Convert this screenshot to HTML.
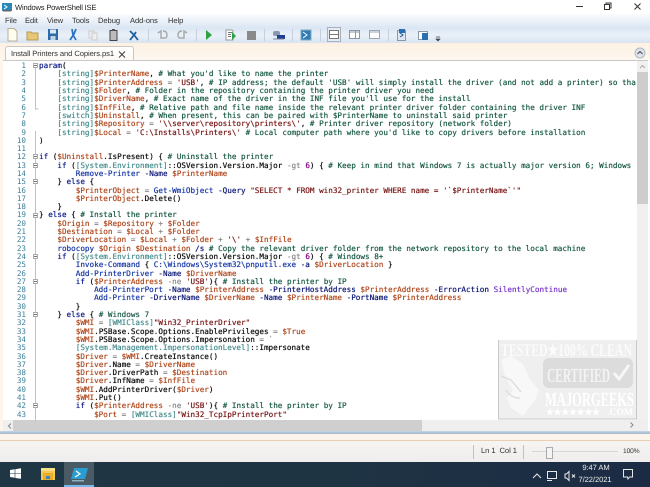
<!DOCTYPE html>
<html><head><meta charset="utf-8"><title>Windows PowerShell ISE</title>
<style>
html,body{margin:0;padding:0;background:#fff}
#r{position:relative;width:650px;height:487px;overflow:hidden;font-family:"Liberation Sans",sans-serif;color:#222;text-rendering:geometricPrecision}
.a{position:absolute}
.ui{position:absolute;white-space:nowrap;font-size:7.6px;letter-spacing:-.08px;line-height:10px;color:#333}
pre{margin:0;font-family:"DejaVu Sans Mono","Liberation Mono",monospace;font-size:7.64px;line-height:8.3px;text-rendering:geometricPrecision;color:#111}
#code{position:absolute;left:39px;top:62.15px;filter:blur(.25px);text-shadow:0 0 .5px currentColor}
#nums{position:absolute;left:5px;width:21px;top:62.15px;text-align:right;color:#3a7f98;filter:blur(.25px)}
#code span{text-shadow:0 0 .5px currentColor}
.s{color:#7a1a1a}.v{color:#b04a20}.c{color:#1c5c48}.t{color:#4a8f90}.m{color:#1a3aa8}.p{color:#101a78}.k{color:#10208a}.o{color:#8a8a8a}.g{color:#7a3ac8}.n{color:#800080}
</style></head><body><div id="r">
<!-- chrome backgrounds -->
<div class="a" style="left:0;top:0;width:650px;height:14px;background:#fff"></div>
<div class="a" style="left:0;top:14px;width:650px;height:14px;background:linear-gradient(#fafcfe,#dbe6f3)"></div>
<div class="a" style="left:0;top:28px;width:650px;height:15px;background:linear-gradient(#dbe6f3,#eaf0f8 50%,#d8e4f2)"></div>
<div class="a" style="left:0;top:43px;width:650px;height:17px;background:linear-gradient(#fdf1e2,#fdf7f0)"></div>
<!-- title -->
<svg class="a" style="left:2px;top:2px" width="10" height="10"><rect x="0" y="1" width="10" height="8" fill="#2a88b8"/><path d="M2 3l3 2-3 2" stroke="#fff" fill="none"/><rect x="1" y="8" width="8" height="1.5" fill="#666"/></svg>
<div class="ui" style="left:15px;top:3px;letter-spacing:-.2px;color:#222">Windows PowerShell ISE</div>
<!-- window controls -->
<svg class="a" style="left:570px;top:0" width="80" height="14" fill="none" stroke="#333"><path d="M6 6.500h7"/><rect x="34.500" y="4.500" width="5" height="5"/><path d="M36 4.500v-1.500h5v5h-1.500"/><path d="M64.500 3.500l6 6m0-6l-6 6"/></svg>
<!-- menu -->
<div class="ui" style="left:5px;top:16px">File</div>
<div class="ui" style="left:25px;top:16px">Edit</div>
<div class="ui" style="left:47px;top:16px">View</div>
<div class="ui" style="left:72px;top:16px">Tools</div>
<div class="ui" style="left:98px;top:16px">Debug</div>
<div class="ui" style="left:130px;top:16px">Add-ons</div>
<div class="ui" style="left:168px;top:16px">Help</div>
<!-- toolbar -->
<svg class="a" style="left:0;top:27px;filter:blur(.3px)" width="450" height="16">
<path d="M8 1.500h6l3 3v9.500h-9z" fill="#fffdf0" stroke="#b8b096"/>
<path d="M27 5h4l1 1h6v7h-11z" fill="#e8c678" stroke="#b99a50"/>
<rect x="48" y="2" width="10" height="11" fill="#2d6aa8"/><rect x="50" y="2.500" width="6" height="4" fill="#dce8f4"/><rect x="50.500" y="9" width="5" height="4" fill="#c4d2e0"/>
<path d="M70 13l4-6 2-5M76 13l-3-5-1-6" stroke="#2a70c0" stroke-width="1.700" fill="none"/>
<rect x="89" y="4" width="5" height="7" fill="#eee" stroke="#ccc"/><rect x="92" y="6" width="5" height="7" fill="#eee" stroke="#ccc"/>
<rect x="110" y="3.500" width="7" height="10" fill="#bbb" stroke="#444"/><rect x="112" y="2" width="3" height="2" fill="#555"/>
<path d="M130 4l4 4 4 5M130 13l4-5 2-3" stroke="#1f5f9f" stroke-width="1.800" fill="none"/>
<path d="M148.500 2v12M196.500 2v12M264.500 2v12M292.500 2v12M320.500 2v12M388.500 2v12" stroke="#c6d0dc"/>
<path d="M158 6l3-2v7h4c1 0 2-1 2-3s-1-4-4-4" stroke="#aaa" stroke-width="1.500" fill="none"/>
<path d="M187 6l-3-2v7h-4c-1 0-2-1-2-3s1-4 4-4" stroke="#aaa" stroke-width="1.500" fill="none"/>
<path d="M206 3l6 5-6 5z" fill="#2fa044"/>
<path d="M226 3h6l1 1v9h-7z" fill="#fff" stroke="#999"/><path d="M228 5.500h4M228 7.500h3M228 9.500h3" stroke="#777"/><path d="M232 5l4 4-4 4z" fill="#2fa044"/>
<rect x="247" y="4" width="9" height="9" fill="#8a8a8a"/>
<rect x="273" y="4" width="7" height="5" rx="2" fill="#889ab0"/><rect x="277" y="8" width="8" height="4" fill="#1f3f90"/><path d="M273 12h11" stroke="#789"/>
<rect x="301" y="3" width="10" height="10" fill="#2f7db8" stroke="#8ab"/><path d="M303 5l4 3-4 3" stroke="#fff" fill="none"/>
<rect x="327.500" y=".5" width="13" height="14" fill="#e4ecf5" stroke="#a8b0bc"/><rect x="329.500" y="3.500" width="9" height="8" fill="#fff" stroke="#777"/><path d="M330 7.500h8" stroke="#777"/>
<rect x="349.500" y="3.500" width="10" height="8" fill="#fff" stroke="#8a97a8"/><path d="M355.500 4v7M350 5h9" stroke="#8a97a8"/>
<rect x="369.500" y="3.500" width="10" height="8" fill="#fff" stroke="#9aa6b6"/><path d="M370 5h9" stroke="#9aa6b6"/>
<rect x="397.500" y="3.500" width="8" height="10" fill="#dfe8f2" stroke="#8a97a8"/><rect x="399" y="2" width="6" height="4" fill="#2a70b0"/><path d="M400 6l3 2-3 2" stroke="#1d5a94" fill="none"/>
<rect x="418.500" y="4.500" width="9" height="8" fill="#fff" stroke="#8a97a8"/><rect x="422" y="6" width="6" height="7" fill="#2a70b0"/>
<path d="M436 10h4M436 12l2 2 2-2z" fill="#444" stroke="#444" stroke-width=".7"/>
</svg>
<!-- tab -->
<div class="a" style="left:5px;top:46px;width:127px;height:15px;background:linear-gradient(#fff,#fdf9f3);border:1px solid #c8c6c0;border-bottom:0;border-radius:3px 3px 0 0"></div>
<div class="ui" style="left:11px;top:49px">Install Printers and Copiers.ps1</div>
<svg class="a" style="left:117px;top:50px" width="10" height="9"><path d="M2 1.500l6 6m0-6l-6 6" stroke="#444" stroke-width="1.100"/></svg>
<svg class="a" style="left:634px;top:47px" width="12" height="12"><circle cx="6" cy="6" r="5" fill="#dfe3ea" stroke="#b0b6c0"/><path d="M3.500 7l2.500-2.500 2.500 2.500" stroke="#445" fill="none"/></svg>
<!-- editor -->
<div class="a" style="left:3px;top:60px;width:645px;height:371px;background:#fff;border-top:1px solid #c9c9c9;box-sizing:border-box"></div>
<div class="a" style="left:0;top:60px;width:3px;height:381px;background:#fdf4ea"></div>
<div class="a" style="left:637px;top:61px;width:11px;height:360px;background:#f0f0f0"></div>
<div class="a" style="left:637px;top:72px;width:11px;height:132px;background:#cdcdcd"></div>
<svg class="a" style="left:637px;top:62px" width="11" height="9"><path d="M3 6l2.500-2.500 2.500 2.500" stroke="#aaa" fill="none"/></svg>
<div class="a" style="left:3px;top:420px;width:645px;height:11px;background:#efefef"></div>
<div class="a" style="left:13px;top:420px;width:409px;height:11px;background:#cfcfcf"></div>
<svg class="a" style="left:5px;top:421px" width="10" height="10"><path d="M6 2.500l-2.500 2.500 2.500 2.500" stroke="#888" fill="none"/></svg>
<div class="a" style="left:0;top:431px;width:650px;height:3px;background:linear-gradient(#c7d6e6,#9fb6cc)"></div>
<div class="a" style="left:0;top:434px;width:650px;height:7px;background:#fdf5ec;border-bottom:1px solid #e8cfae;box-sizing:border-box"></div>
<div class="a" style="left:0;top:441px;width:650px;height:21px;background:linear-gradient(#f7f5f3,#efeded)"></div>
<!-- fold gutter -->
<svg class="a" style="left:30px;top:60px" width="9" height="361" fill="#fff" stroke="#aaa" stroke-width="1">
<path d="M5.500 8v41h3M5.500 71v290" fill="none" stroke="#c0c0c0"/>
<g><rect x="3.500" y="3.500" width="4" height="4"/><rect x="3.500" y="94.500" width="4" height="4"/><rect x="3.500" y="103.500" width="4" height="4"/><rect x="3.500" y="119.500" width="4" height="4"/><rect x="3.500" y="153.500" width="4" height="4"/><rect x="3.500" y="194.500" width="4" height="4"/><rect x="3.500" y="219.500" width="4" height="4"/><rect x="3.500" y="252.500" width="4" height="4"/><rect x="3.500" y="343.500" width="4" height="4"/></g>
<path d="M4 5.500h3M4 96.500h3M4 105.500h3M4 121.500h3M4 155.500h3M4 196.500h3M4 221.500h3M4 254.500h3M4 345.500h3" stroke="#777" fill="none"/>
</svg>
<pre id="nums">1
2
3
4
5
6
7
8
9
10
11
12
13
14
15
16
17
18
19
20
21
22
23
24
25
26
27
28
29
30
31
32
33
34
35
36
37
38
39
40
41
42
43</pre>
<pre id="code"><span class="k">param</span>(
    <span class="t">[string]</span><span class="v">$PrinterName</span>, <span class="c"># What you'd like to name the printer</span>
    <span class="t">[string]</span><span class="v">$PrinterAddress</span> <span class="o">=</span> <span class="s">'USB'</span>, <span class="c"># IP address; the default 'USB' will simply install the driver (and not add a printer) so tha</span>
    <span class="t">[string]</span><span class="v">$Folder</span>, <span class="c"># Folder in the repository containing the printer driver you need</span>
    <span class="t">[string]</span><span class="v">$DriverName</span>, <span class="c"># Exact name of the driver in the INF file you'll use for the install</span>
    <span class="t">[string]</span><span class="v">$InfFile</span>, <span class="c"># Relative path and file name inside the relevant printer driver folder containing the driver INF</span>
    <span class="t">[switch]</span><span class="v">$Uninstall</span>, <span class="c"># When present, this can be paired with $PrinterName to uninstall said printer</span>
    <span class="t">[string]</span><span class="v">$Repository</span> <span class="o">=</span> <span class="s">'\\server\repository\printers\'</span>, <span class="c"># Printer driver repository (network folder)</span>
    <span class="t">[string]</span><span class="v">$Local</span> <span class="o">=</span> <span class="s">'C:\Installs\Printers\'</span> <span class="c"># Local computer path where you'd like to copy drivers before installation</span>
)

<span class="k">if</span> (<span class="v">$Uninstall</span>.IsPresent) { <span class="c"># Uninstall the printer</span>
    <span class="k">if</span> (<span class="t">[System.Environment]</span>::OSVersion.Version.Major <span class="o">-gt</span> <span class="n">6</span>) { <span class="c"># Keep in mind that Windows 7 is actually major version 6; Windows</span>
        <span class="m">Remove-Printer</span> <span class="p">-Name</span> <span class="v">$PrinterName</span>
    } <span class="k">else</span> {
        <span class="v">$PrinterObject</span> <span class="o">=</span> <span class="m">Get-WmiObject</span> <span class="p">-Query</span> <span class="s">"SELECT * FROM win32_printer WHERE name = '`$PrinterName`'"</span>
        <span class="v">$PrinterObject</span>.Delete()
    }
} <span class="k">else</span> { <span class="c"># Install the printer</span>
    <span class="v">$Origin</span> <span class="o">=</span> <span class="v">$Repository</span> <span class="o">+</span> <span class="v">$Folder</span>
    <span class="v">$Destination</span> <span class="o">=</span> <span class="v">$Local</span> <span class="o">+</span> <span class="v">$Folder</span>
    <span class="v">$DriverLocation</span> <span class="o">=</span> <span class="v">$Local</span> <span class="o">+</span> <span class="v">$Folder</span> <span class="o">+</span> <span class="s">'\'</span> <span class="o">+</span> <span class="v">$InfFile</span>
    <span class="m">robocopy</span> <span class="v">$Origin</span> <span class="v">$Destination</span> <span class="p">/s</span> <span class="c"># Copy the relevant driver folder from the network repository to the local machine</span>
    <span class="k">if</span> (<span class="t">[System.Environment]</span>::OSVersion.Version.Major <span class="o">-gt</span> <span class="n">6</span>) { <span class="c"># Windows 8+</span>
        <span class="m">Invoke-Command</span> { <span class="m">C:\Windows\System32\pnputil.exe</span> <span class="p">-a</span> <span class="v">$DriverLocation</span> }
        <span class="m">Add-PrinterDriver</span> <span class="p">-Name</span> <span class="v">$DriverName</span>
        <span class="k">if</span> (<span class="v">$PrinterAddress</span> <span class="o">-ne</span> <span class="s">'USB'</span>){ <span class="c"># Install the printer by IP</span>
            <span class="m">Add-PrinterPort</span> <span class="p">-Name</span> <span class="v">$PrinterAddress</span> <span class="p">-PrinterHostAddress</span> <span class="v">$PrinterAddress</span> <span class="p">-ErrorAction</span> <span class="g">SilentlyContinue</span>
            <span class="m">Add-Printer</span> <span class="p">-DriverName</span> <span class="v">$DriverName</span> <span class="p">-Name</span> <span class="v">$PrinterName</span> <span class="p">-PortName</span> <span class="v">$PrinterAddress</span>
        }
    } <span class="k">else</span> { <span class="c"># Windows 7</span>
        <span class="v">$WMI</span> <span class="o">=</span> <span class="t">[WMIClass]</span><span class="s">"Win32_PrinterDriver"</span>
        <span class="v">$WMI</span>.PSBase.Scope.Options.EnablePrivileges <span class="o">=</span> <span class="v">$True</span>
        <span class="v">$WMI</span>.PSBase.Scope.Options.Impersonation <span class="o">=</span> <span class="o">`</span>
        <span class="t">[System.Management.ImpersonationLevel]</span>::Impersonate
        <span class="v">$Driver</span> <span class="o">=</span> <span class="v">$WMI</span>.CreateInstance()
        <span class="v">$Driver</span>.Name <span class="o">=</span> <span class="v">$DriverName</span>
        <span class="v">$Driver</span>.DriverPath <span class="o">=</span> <span class="v">$Destination</span>
        <span class="v">$Driver</span>.InfName <span class="o">=</span> <span class="v">$InfFile</span>
        <span class="v">$WMI</span>.AddPrinterDriver(<span class="v">$Driver</span>)
        <span class="v">$WMI</span>.Put()
        <span class="k">if</span> (<span class="v">$PrinterAddress</span> <span class="o">-ne</span> <span class="s">'USB'</span>){ <span class="c"># Install the printer by IP</span>
            <span class="v">$Port</span> <span class="o">=</span> <span class="t">[WMIClass]</span><span class="s">"Win32_TcpIpPrinterPort"</span></pre>
<!-- watermark -->
<svg class="a" style="left:498px;top:340px;filter:blur(.3px)" width="139" height="80" font-family="'Liberation Serif',serif" font-weight="bold">
<rect x=".5" y="-1" width="138" height="80" fill="#efefef" stroke="#c8c8c8"/>
<text x="3" y="16" font-size="18" fill="#fbfbfb" textLength="131" lengthAdjust="spacingAndGlyphs">TESTED&#9733;100% CLEAN</text>
<rect x="45" y="18" width="90" height="30" rx="6" fill="#dcdcdc"/>
<text x="49" y="42" font-size="20" fill="#f3f3f3" textLength="63" lengthAdjust="spacingAndGlyphs">CERTIFIED</text>
<path d="M116 33l5 6 10-14" stroke="#f6f6f6" stroke-width="3" fill="none"/>
<text x="47" y="66" font-size="20" fill="#fff" textLength="89" lengthAdjust="spacingAndGlyphs">MAJORGEEKS</text>
<text x="48" y="75" font-size="9" fill="#fff" textLength="54" lengthAdjust="spacingAndGlyphs">&#9733;&#9733;&#9733;&#9733;&#9733;&#9733;&#9733;</text>
<text x="109" y="75" font-size="10" fill="#fff" textLength="26" lengthAdjust="spacingAndGlyphs">.COM</text>
<path d="M3 20l10-4 12 8 6 14 10 12-4 10-12 16-12-8-4-10 6-8-8-14z" fill="#f8f8f8"/>
<path d="M3 36l10 4 10 12M8 50c4 6 8 8 14 8" stroke="#dedede" stroke-width="1.500" fill="none"/>
</svg>
<svg class="a" style="left:627px;top:420px" width="10" height="10"><path d="M3.500 2.500l2.500 2.500-2.500 2.500" stroke="#888" fill="none"/></svg>
<!-- status bar -->
<div class="a" style="left:473px;top:445px;width:1px;height:14px;background:#c4c0bc"></div>
<div class="a" style="left:523px;top:445px;width:1px;height:14px;background:#c4c0bc"></div>
<div class="ui" style="left:481px;top:446px">Ln 1&nbsp; Col 1</div>
<div class="a" style="left:532px;top:451px;width:86px;height:1px;background:#d6d6d6"></div>
<div class="a" style="left:546px;top:447px;width:5px;height:10px;background:#f4f4f4;border:1px solid #aaa"></div>
<div class="ui" style="left:623px;top:447px;font-size:6.600px">100%</div>
<!-- taskbar -->
<div class="a" style="left:0;top:462px;width:650px;height:25px;background:linear-gradient(90deg,#1f3644,#1f3443 50%,#1b2b44)"></div>
<div class="a" style="left:64px;top:462px;width:30px;height:25px;background:#4b5b66"></div>
<div class="a" style="left:64px;top:485px;width:30px;height:2px;background:#76b9ed"></div>
<svg class="a" style="left:10px;top:468px" width="11" height="11" fill="#fff"><path d="M0 2l4.700-.7v4H0zM5.300 1.200L11 .3v5H5.300zM0 5.800h4.700v4L0 9zM5.300 5.800H11v5l-5.700-.8z"/></svg>
<svg class="a" style="left:41px;top:468px" width="15" height="12"><rect x="0" y="0" width="14" height="12" fill="#f4c94e"/><rect x="0" y="0" width="14" height="3" fill="#fbe08a"/><rect x="2" y="5" width="10" height="7" fill="#e8ad2a"/><rect x="5" y="8" width="4" height="3" fill="#3a87c8"/></svg>
<svg class="a" style="left:71px;top:468px" width="17" height="14"><path d="M3 0h14l-3 11H0z" fill="#2a9ed0"/><path d="M5 3l4 3-5 3" stroke="#fff" stroke-width="1.200" fill="none"/><rect x="1" y="12" width="12" height="1.500" fill="#8fb0c0"/></svg>
<svg class="a" style="left:532px;top:470px" width="48" height="12" fill="none" stroke="#e8e8e8"><path d="M1 8l4-4 4 4"/><rect x="15.500" y="1.500" width="9" height="7"/><path d="M15 10.500h5"/><path d="M33 4v4h1.500l2.500 2.500v-9L34.500 4z"/><path d="M40 4.500l3 3m0-3l-3 3"/></svg>
<div class="ui" style="left:578px;top:463px;width:36px;text-align:center;color:#e8e8e8">9:47 AM</div>
<div class="ui" style="left:576px;top:475px;width:38px;text-align:center;color:#e8e8e8">7/22/2021</div>
<svg class="a" style="left:623px;top:469px" width="12" height="11" fill="none" stroke="#e8e8e8"><path d="M.5 .5h9v7.500h-3l-1.500 2-.5-2h-4z"/></svg>
</div></body></html>
